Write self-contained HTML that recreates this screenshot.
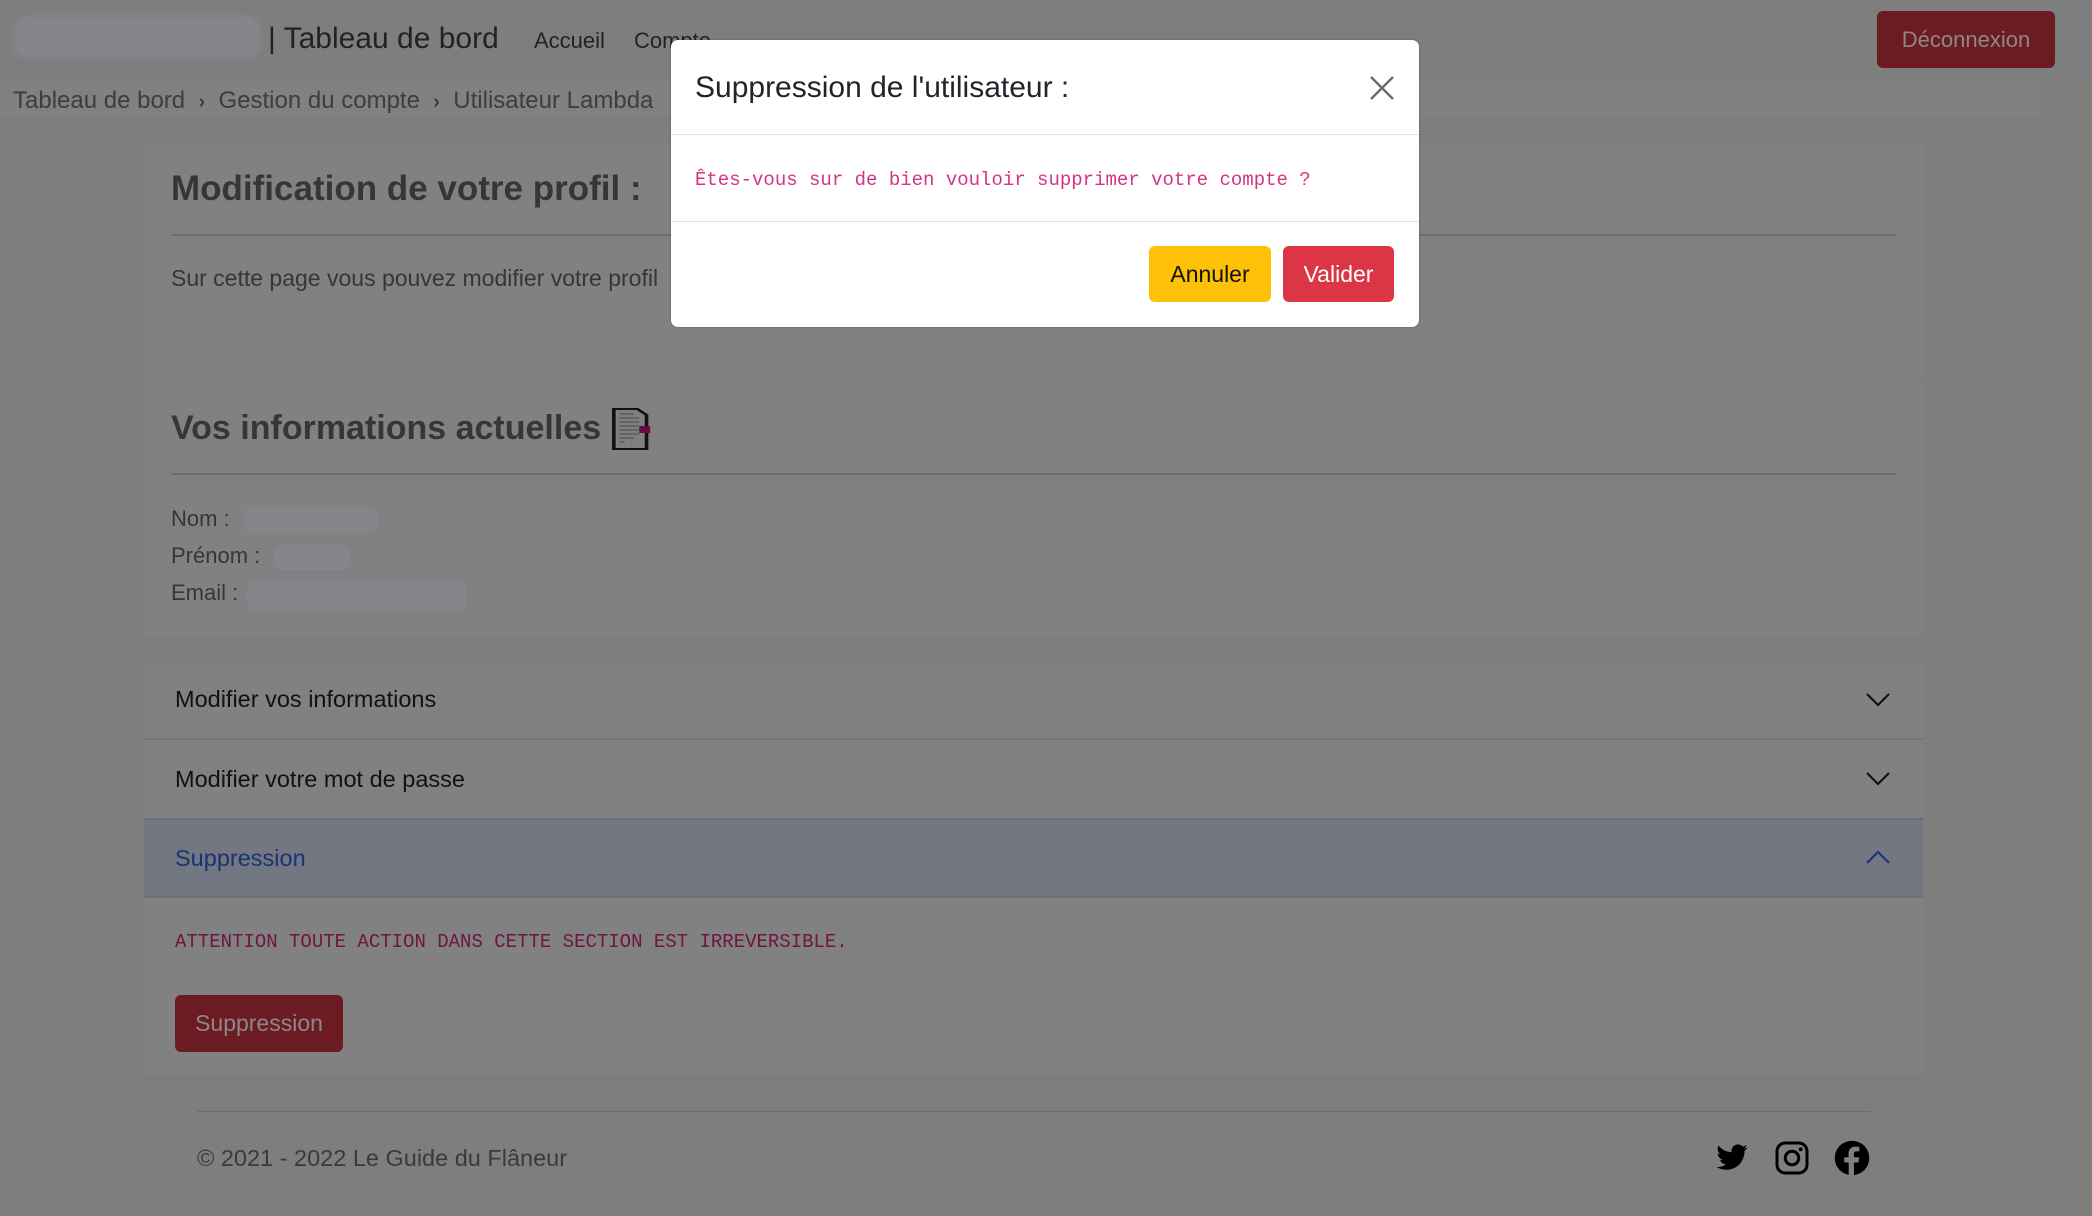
<!DOCTYPE html>
<html><head><meta charset="utf-8"><style>
*{box-sizing:border-box;margin:0;padding:0}
body{width:2092px;height:1216px;background:#7f7e7d;font-family:"Liberation Sans",sans-serif;color:#343434;position:relative;overflow:hidden}
.a{position:absolute;white-space:nowrap}
.mono{font-family:"Liberation Mono",monospace}
</style></head><body>
<div class="a" style="left:0;top:0;width:2092px;height:80px;background:#7d7f7e"></div>
<div class="a" style="left:0;top:80px;width:2040px;height:37px;background:#818181"></div>
<div class="a" style="left:13px;top:16px;width:247px;height:42px;border-radius:14px;background:#85868b;filter:blur(2px)"></div>
<div class="a" style="left:268px;top:22px;font-size:30px;color:#222">| Tableau de bord</div>
<div class="a" style="left:534px;top:28px;font-size:22px;color:#222">Accueil</div>
<div class="a" style="left:634px;top:28px;font-size:22px;color:#222">Compte</div>
<div class="a" style="left:1877px;top:11px;width:178px;height:57px;border-radius:6px;background:#6c1b22;color:#8d8888;font-size:22px;text-align:center;line-height:57px">Déconnexion</div>
<div class="a" style="left:13px;top:87px;font-size:24px;color:#3d3d3d">Tableau de bord &nbsp;<b style="font-size:20px">›</b>&nbsp; Gestion du compte &nbsp;<b style="font-size:20px">›</b>&nbsp; Utilisateur Lambda</div>

<div class="a" style="left:144px;top:143px;width:1779px;height:237px;background:#818181;border-radius:6px"></div>
<div class="a" style="left:171px;top:169px;font-size:35px;font-weight:bold;color:#363636">Modification de votre profil :</div>
<div class="a" style="left:171px;top:234px;width:1726px;height:2px;background:#6e6e6e"></div>
<div class="a" style="left:171px;top:265px;font-size:23px;color:#363636">Sur cette page vous pouvez modifier votre profil</div>

<div class="a" style="left:144px;top:383px;width:1779px;height:253px;background:#818181;border-radius:6px"></div>
<div class="a" style="left:171px;top:409px;font-size:34px;font-weight:bold;color:#363636">Vos informations actuelles</div>
<svg class="a" style="left:612px;top:408px" width="40" height="42" viewBox="0 0 22 42" preserveAspectRatio="none"><path d="M1 1h13l5 6v34H1z" fill="#7f7f7f" stroke="#111" stroke-width="2"/><path d="M4 6h8M4 10h11M4 14h11M4 18h11M4 22h11M4 26h11M4 30h8M4 34h3" stroke="#555" stroke-width="1.3"/><rect x="15" y="18" width="6" height="7" fill="#6a0a45"/></svg>
<div class="a" style="left:171px;top:473px;width:1726px;height:2px;background:#6e6e6e"></div>
<div class="a" style="left:171px;top:506px;font-size:22px;color:#363636">Nom :</div>
<div class="a" style="left:171px;top:543px;font-size:22px;color:#363636">Prénom :</div>
<div class="a" style="left:171px;top:580px;font-size:22px;color:#363636">Email :</div>
<div class="a" style="left:244px;top:507px;width:134px;height:26px;border-radius:10px;background:#85868b"></div>
<div class="a" style="left:273px;top:544px;width:78px;height:26px;border-radius:10px;background:#85868b"></div>
<div class="a" style="left:247px;top:580px;width:220px;height:32px;border-radius:12px;background:#85868b"></div>

<div class="a" style="left:144px;top:663px;width:1779px;height:411px;background:#818181"></div>
<div class="a" style="left:144px;top:738px;width:1779px;height:2px;background:#767676"></div>
<div class="a" style="left:144px;top:818px;width:1779px;height:80px;background:#727782;border-top:2px solid #6c6f75;border-bottom:2px solid #6c6f75"></div>
<div class="a" style="left:175px;top:686px;font-size:23.5px;color:#111">Modifier vos informations</div>
<div class="a" style="left:175px;top:766px;font-size:23.5px;color:#111">Modifier votre mot de passe</div>
<div class="a" style="left:175px;top:845px;font-size:23.5px;color:#1a3276">Suppression</div>
<svg class="a" style="left:1865px;top:690px" width="26" height="18"><path d="M2 4l11 11 11-11" fill="none" stroke="#111" stroke-width="2.2"/></svg>
<svg class="a" style="left:1865px;top:769px" width="26" height="18"><path d="M2 4l11 11 11-11" fill="none" stroke="#111" stroke-width="2.2"/></svg>
<svg class="a" style="left:1865px;top:848px" width="26" height="18"><path d="M2 15l11-11 11 11" fill="none" stroke="#1a3276" stroke-width="2.2"/></svg>
<div class="a mono" style="left:175px;top:931px;font-size:19px;color:#6e1540">ATTENTION TOUTE ACTION DANS CETTE SECTION EST IRREVERSIBLE.</div>
<div class="a" style="left:175px;top:995px;width:168px;height:57px;border-radius:6px;background:#6c1b22;color:#8d8888;font-size:23px;text-align:center;line-height:57px">Suppression</div>

<div class="a" style="left:197px;top:1111px;width:1674px;height:1px;background:#6a6e74"></div>
<div class="a" style="left:197px;top:1145px;font-size:23.5px;color:#3a3a3a">© 2021 - 2022 Le Guide du Flâneur</div>
<svg class="a" style="left:1714px;top:1141px" width="36" height="34" viewBox="0 0 24 24"><path d="M23 4.6a9 9 0 0 1-2.6.7 4.6 4.6 0 0 0 2-2.5 9 9 0 0 1-2.9 1.1A4.5 4.5 0 0 0 11.8 8 12.8 12.8 0 0 1 2.5 3.3a4.5 4.5 0 0 0 1.4 6 4.5 4.5 0 0 1-2-.6 4.5 4.5 0 0 0 3.6 4.5 4.5 4.5 0 0 1-2 .1 4.5 4.5 0 0 0 4.2 3.1A9 9 0 0 1 1 18.3 12.8 12.8 0 0 0 8 20.3c8.3 0 12.8-6.9 12.8-12.8v-.6A9 9 0 0 0 23 4.6z" fill="#000"/></svg>
<svg class="a" style="left:1774px;top:1140px" width="36" height="36" viewBox="0 0 24 24"><rect x="2" y="2" width="20" height="20" rx="5.5" fill="none" stroke="#000" stroke-width="2"/><circle cx="12" cy="12" r="4.5" fill="none" stroke="#000" stroke-width="2"/><circle cx="17.8" cy="6.2" r="1.3" fill="#000"/></svg>
<svg class="a" style="left:1834px;top:1140px" width="36" height="36" viewBox="0 0 24 24"><circle cx="12" cy="12" r="11.5" fill="#000"/><path d="M13.3 24V15h3l.5-3.5h-3.5V9.3c0-1 .3-1.7 1.8-1.7h1.8V4.5a24 24 0 0 0-2.7-.1c-2.7 0-4.5 1.6-4.5 4.6v2.5H6.8V15h3v9z" fill="#7f7f7f"/></svg>

<div class="a" style="left:671px;top:40px;width:748px;height:287px;background:#fff;border-radius:7px;box-shadow:0 0 2px rgba(0,0,0,.3)"></div>
<div class="a" style="left:671px;top:134px;width:748px;height:1px;background:#dee2e6"></div>
<div class="a" style="left:671px;top:221px;width:748px;height:1px;background:#dee2e6"></div>
<div class="a" style="left:695px;top:71px;font-size:30px;color:#212529">Suppression de l'utilisateur :</div>
<svg class="a" style="left:1369px;top:75px" width="26" height="26"><path d="M2 2l22 22M24 2L2 24" stroke="#6c6c6c" stroke-width="2.4"/></svg>
<div class="a mono" style="left:695px;top:169px;font-size:19px;color:#d63384">Êtes-vous sur de bien vouloir supprimer votre compte ?</div>
<div class="a" style="left:1149px;top:246px;width:122px;height:56px;border-radius:6px;background:#ffc107;color:#111;font-size:23px;text-align:center;line-height:56px">Annuler</div>
<div class="a" style="left:1283px;top:246px;width:111px;height:56px;border-radius:6px;background:#dc3545;color:#fff;font-size:23px;text-align:center;line-height:56px">Valider</div>
</body></html>
